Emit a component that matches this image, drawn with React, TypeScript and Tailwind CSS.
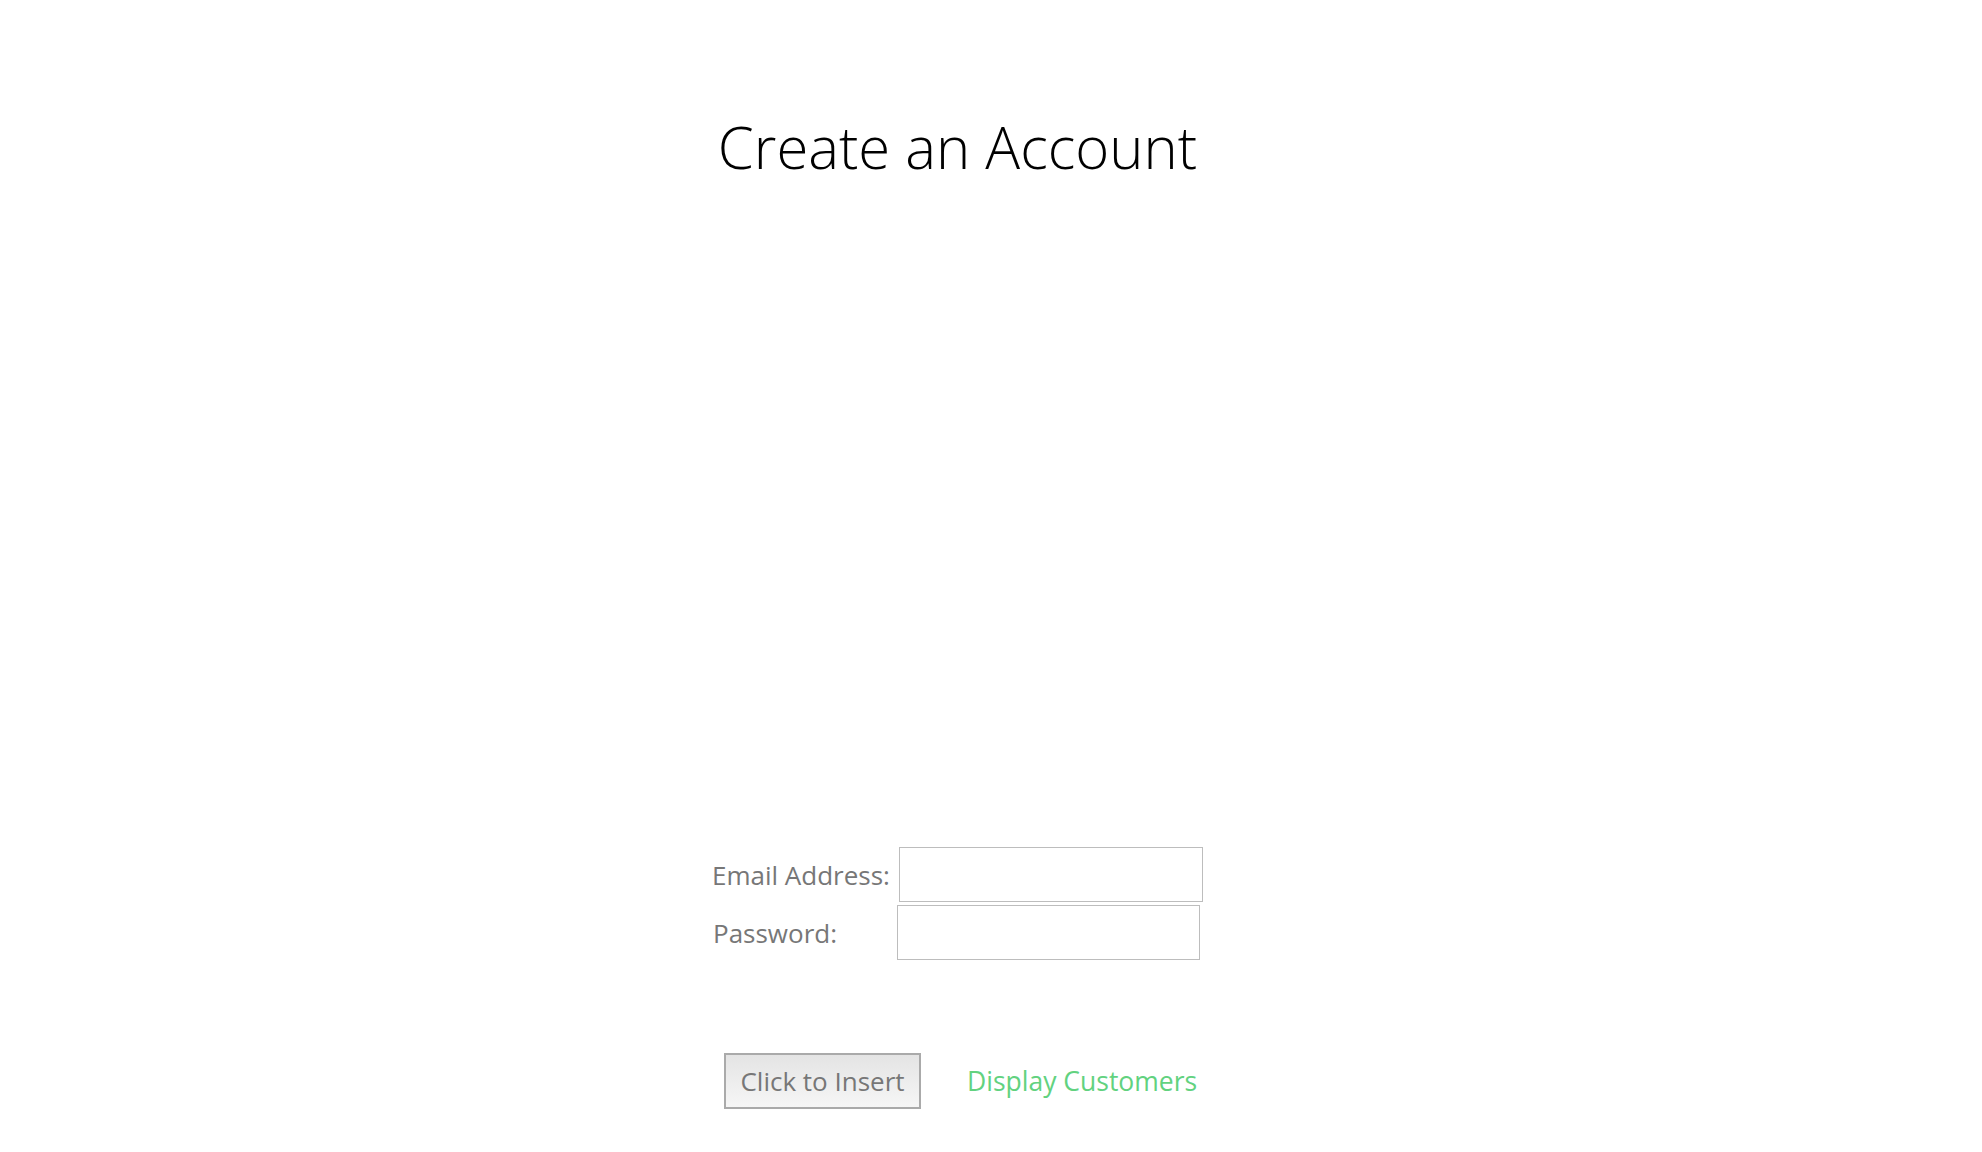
import React from "react";

export default function App() {
  return (
    <div
      className="min-h-[1152px] w-full bg-white flex justify-center pr-[67px]"
      style={{ fontFamily: '"Open Sans", "Noto Sans", sans-serif' }}
    >
      <div className="w-[491px] flex flex-col">
        <h1 className="mt-[117px] text-center text-[58px] leading-[60px] font-light text-black whitespace-nowrap">
          Create an Account
        </h1>

        <div className="mt-[670px] flex flex-col gap-[3px]">
          <div className="flex items-center">
            <label className="w-[187px] text-[26px] leading-[40px] text-[#777] whitespace-nowrap">
              Email Address:
            </label>
            <input
              type="text"
              className="w-[304px] h-[55px] border border-[#bdbdbd] bg-white outline-none"
            />
          </div>
          <div className="flex items-center pl-px">
            <label className="w-[184px] text-[26px] leading-[40px] text-[#777] whitespace-nowrap">
              Password:
            </label>
            <input
              type="password"
              className="w-[303px] h-[55px] border border-[#bdbdbd] bg-white outline-none"
            />
          </div>
        </div>

        <div className="mt-[93px] flex items-center pl-[12px]">
          <button className="w-[197px] h-[56px] border-2 border-[#aaaaaa] bg-gradient-to-b from-[#e4e4e4] to-[#f6f6f6] text-[26px] text-[#777] leading-none whitespace-nowrap">
            Click to Insert
          </button>
          <a className="ml-[46px] text-[26.5px] text-[#62d27f] leading-none cursor-pointer whitespace-nowrap">
            Display Customers
          </a>
        </div>
      </div>
    </div>
  );
}
